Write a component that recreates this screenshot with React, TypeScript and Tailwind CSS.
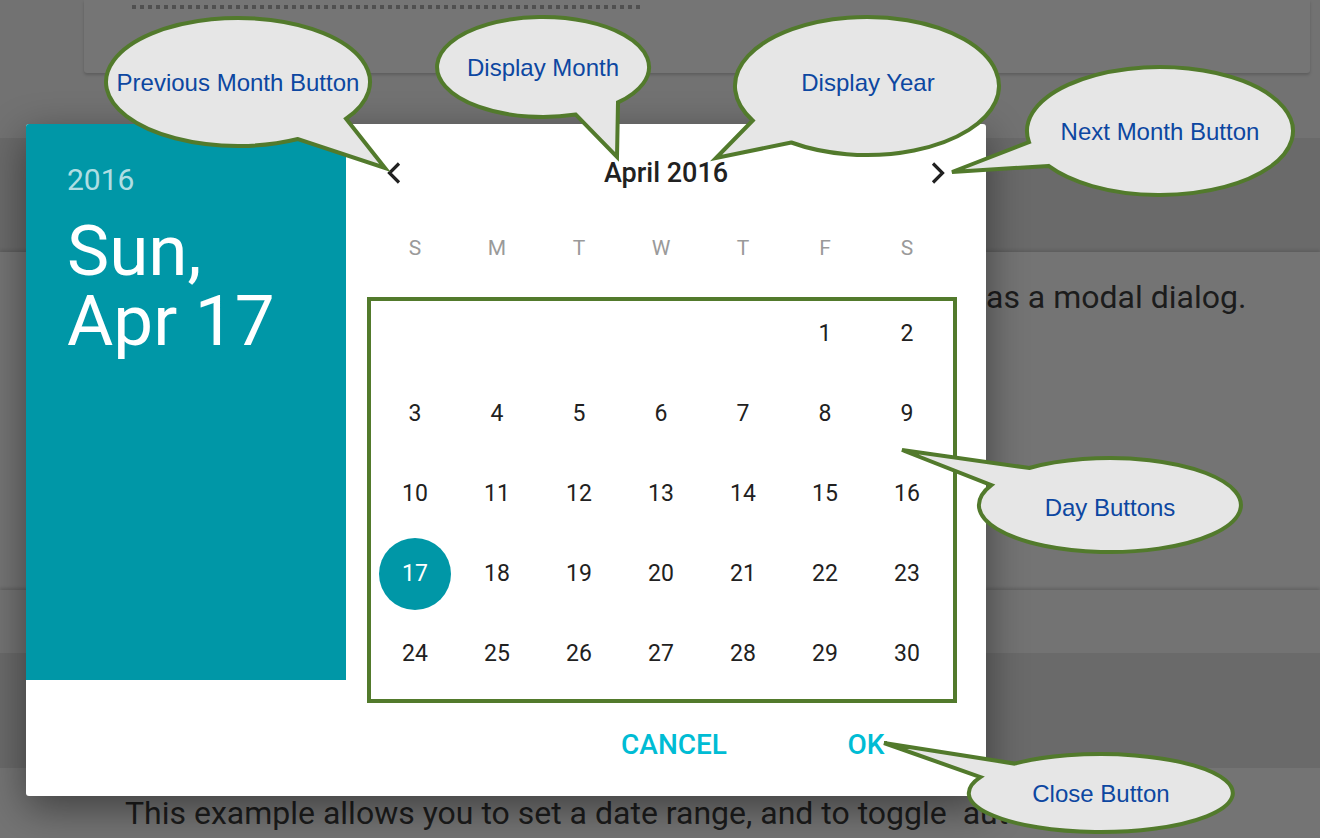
import React from "react";

const weekdays = ["S", "M", "T", "W", "T", "F", "S"];

function buildWeeks(): (number | null)[][] {
  const cells: (number | null)[] = [null, null, null, null, null];
  for (let d = 1; d <= 30; d++) cells.push(d);
  const weeks: (number | null)[][] = [];
  for (let i = 0; i < cells.length; i += 7) {
    const w = cells.slice(i, i + 7);
    while (w.length < 7) w.push(null);
    weeks.push(w);
  }
  return weeks;
}

function bubblePath(
  cx: number,
  cy: number,
  rx: number,
  ry: number,
  tx: number,
  ty: number,
  a1: number,
  a2: number
) {
  const r = Math.PI / 180;
  const p = (a: number) => [cx + rx * Math.cos(a * r), cy + ry * Math.sin(a * r)];
  const [x1, y1] = p(a1);
  const [x2, y2] = p(a2);
  return `M ${x1.toFixed(1)} ${y1.toFixed(1)} L ${tx} ${ty} L ${x2.toFixed(1)} ${y2.toFixed(1)} A ${rx} ${ry} 0 1 1 ${x1.toFixed(1)} ${y1.toFixed(1)} Z`;
}

const bubbles = [
  { cx: 238, cy: 82, rx: 132, ry: 64, tx: 385, ty: 168, a1: 35, a2: 63, label: "Previous Month Button", lx: 238, ly: 82 },
  { cx: 543, cy: 67, rx: 106, ry: 50, tx: 617, ty: 157, a1: 45, a2: 72, label: "Display Month", lx: 543, ly: 67 },
  { cx: 867, cy: 86, rx: 132, ry: 69, tx: 716, ty: 158, a1: 125, a2: 150, label: "Display Year", lx: 868, ly: 82 },
  { cx: 1160, cy: 131, rx: 133, ry: 64, tx: 952, ty: 172, a1: 147, a2: 170, label: "Next Month Button", lx: 1160, ly: 131 },
  { cx: 1110, cy: 505, rx: 131, ry: 47, tx: 902, ty: 450, a1: 205, a2: 232, label: "Day Buttons", lx: 1110, ly: 507 },
  { cx: 1101, cy: 793, rx: 132, ry: 39, tx: 884, ty: 743, a1: 204, a2: 229, label: "Close Button", lx: 1101, ly: 793 },
];

function Chevron({ dir }: { dir: "left" | "right" }) {
  return (
    <svg width="14" height="22" viewBox="0 0 14 22" fill="none">
      <polyline
        points={dir === "left" ? "12,1.5 2.5,11 12,20.5" : "2,1.5 11.5,11 2,20.5"}
        stroke="#212121"
        strokeWidth="3.2"
        strokeLinejoin="miter"
      />
    </svg>
  );
}

export default function App() {
  const weeks = buildWeeks();
  return (
    <div className="relative w-[1320px] h-[838px] overflow-hidden bg-[#727272] font-['Roboto',sans-serif]">
      {/* background page */}
      <div className="flex flex-col">
        <div className="h-[74px] pl-[84px] pr-[10px]">
          <div className="h-[73px] bg-[#757575] rounded-b-[3px] shadow-[0_2px_3px_rgba(0,0,0,0.18)] pt-[5px] pl-[48px]">
            <div className="w-[512px] h-[4px] bg-[repeating-linear-gradient(90deg,#505050_0_4px,transparent_4px_8px)]" />
          </div>
        </div>
        <div className="h-[64px]" />
        <div className="h-[114px] bg-[#6a6a6a]" />
        <div className="h-[338px] bg-[#747474] shadow-[0_-2px_3px_rgba(0,0,0,0.12)] pt-[27px] pl-[125px]">
          <p className="flex text-[32px] leading-[36px] text-[#1c1c1c] whitespace-nowrap">
            <span className="inline-block w-[861px] overflow-hidden">The date picker can be displayed</span>
            <span>as a modal dialog.</span>
          </p>
        </div>
        <div className="h-[63px] bg-[#737373] shadow-[0_-2px_3px_rgba(0,0,0,0.15)]" />
        <div className="h-[115px] bg-[#6a6a6a]" />
        <div className="h-[70px] bg-[#747474] pt-[27px] pl-[125px]">
          <p className="text-[32px] leading-[36px] text-[#1c1c1c] whitespace-nowrap">
            This example allows you to set a date range, and to toggle&nbsp; auto ok.
          </p>
        </div>
      </div>

      {/* dialog */}
      <div className="absolute left-[26px] top-[124px] w-[960px] h-[672px] bg-white rounded-[3px] shadow-[0_12px_40px_rgba(0,0,0,0.45)] flex overflow-hidden">
        <div className="w-[320px] flex flex-col">
          <div className="h-[556px] bg-[#0097a7] pl-[41px] pt-[39px] text-white">
            <div className="text-[30px] leading-[34px] text-white/70">2016</div>
            <div className="mt-[19px] text-[71px] leading-[70px]">
              <div>Sun,</div>
              <div>Apr 17</div>
            </div>
          </div>
        </div>
        <div className="w-[640px] flex flex-col">
          <div className="h-[98px] flex items-center justify-between px-[24px]">
            <button className="w-[48px] h-[48px] flex items-center justify-center">
              <Chevron dir="left" />
            </button>
            <div className="flex-1 text-center text-[27px] font-medium text-[#212121]">April 2016</div>
            <button className="w-[48px] h-[48px] flex items-center justify-center">
              <Chevron dir="right" />
            </button>
          </div>
          <div className="ml-[28px] w-[574px] h-[52px] grid grid-cols-7 items-center">
            {weekdays.map((d, i) => (
              <div key={i} className="text-center text-[21px] text-[#9a9a9a] pt-[2px]">
                {d}
              </div>
            ))}
          </div>
          <div className="ml-[28px] mt-[20px] w-[574px] flex flex-col">
            {weeks.map((w, wi) => (
              <div key={wi} className="h-[80px] grid grid-cols-7">
                {w.map((d, di) => (
                  <div key={di} className="flex items-center justify-center">
                    {d === 17 ? (
                      <div className="w-[72px] h-[72px] rounded-full bg-[#0097a7] flex items-center justify-center text-[23px] text-white">
                        17
                      </div>
                    ) : d ? (
                      <span className="text-[23px] text-[#212121]">{d}</span>
                    ) : null}
                  </div>
                ))}
              </div>
            ))}
          </div>
          <div className="h-[102px] flex items-center justify-end pr-[76px] gap-[78px]">
            <button className="w-[140px] text-center text-[28px] font-medium text-[#00bcd4]">CANCEL</button>
            <button className="w-[88px] text-center text-[28px] font-medium text-[#00bcd4]">OK</button>
          </div>
        </div>
      </div>

      {/* annotations */}
      <svg className="absolute inset-0 pointer-events-none" width="1320" height="838" viewBox="0 0 1320 838">
        <rect x="369" y="299" width="586" height="402" fill="none" stroke="#527a2c" strokeWidth="4" />
        {bubbles.map((b, i) => (
          <g key={i}>
            <path
              d={bubblePath(b.cx, b.cy, b.rx, b.ry, b.tx, b.ty, b.a1, b.a2)}
              fill="#e6e6e6"
              stroke="#527a2c"
              strokeWidth="4"
              strokeLinejoin="miter"
            />
            <text
              x={b.lx}
              y={b.ly}
              textAnchor="middle"
              dominantBaseline="central"
              fontFamily="'Liberation Sans', Arial, sans-serif"
              fontSize="24"
              fill="#0d47a1"
            >
              {b.label}
            </text>
          </g>
        ))}
      </svg>
    </div>
  );
}
